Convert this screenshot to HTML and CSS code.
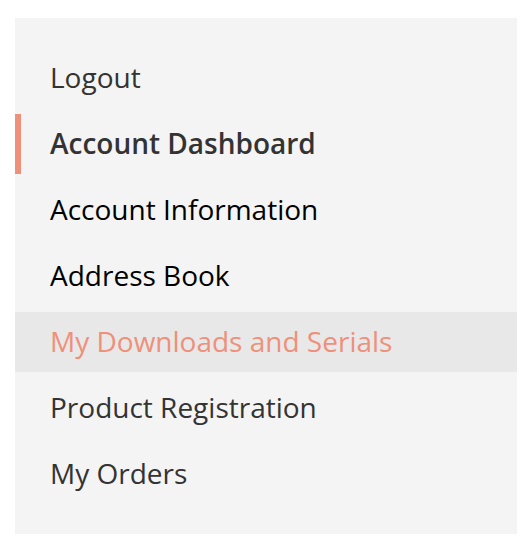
FILE: index.html
```html
<!DOCTYPE html>
<html lang="en">
<head>
<meta charset="utf-8">
<title>Account Navigation</title>
<link rel="stylesheet" href="styles.css">
</head>
<body>
<nav class="account-nav">
  <ul class="nav-list">
    <li class="nav-item"><a class="nav-link" href="#">Logout</a></li>
    <li class="nav-item nav-item--current"><strong class="nav-link">Account Dashboard</strong></li>
    <li class="nav-item"><a class="nav-link nav-link--dark" href="#">Account Information</a></li>
    <li class="nav-item"><a class="nav-link nav-link--dark" href="#">Address Book</a></li>
    <li class="nav-item nav-item--hover"><a class="nav-link" href="#">My Downloads and Serials</a></li>
    <li class="nav-item"><a class="nav-link" href="#">Product Registration</a></li>
    <li class="nav-item"><a class="nav-link" href="#">My Orders</a></li>
  </ul>
</nav>
</body>
</html>
```

FILE: styles.css
```css
html, body {
  margin: 0;
  padding: 0;
  background: #ffffff;
}

body {
  padding: 18px 11px 0 15px;
  font-family: "Open Sans", "Liberation Sans", sans-serif;
}

.account-nav {
  background: #f4f4f4;
  padding: 30px 0;
}

.nav-list {
  list-style: none;
  margin: 0;
  padding: 0;
  display: flex;
  flex-direction: column;
  gap: 6px;
}

.nav-item {
  display: block;
}

.nav-link {
  display: block;
  height: 40px;
  line-height: 40px;
  padding: 9px 36px 11px 29px;
  border-left: 6px solid transparent;
  font-size: 28px;
  font-weight: 400;
  color: #333333;
  text-decoration: none;
  white-space: nowrap;
}

.nav-link--dark {
  color: #000000;
}

.nav-item--current .nav-link {
  font-weight: 600;
  border-left-color: #ef907a;
  color: #333333;
}

.nav-item--hover .nav-link {
  background: #e8e8e8;
  color: #ef907a;
}
```
